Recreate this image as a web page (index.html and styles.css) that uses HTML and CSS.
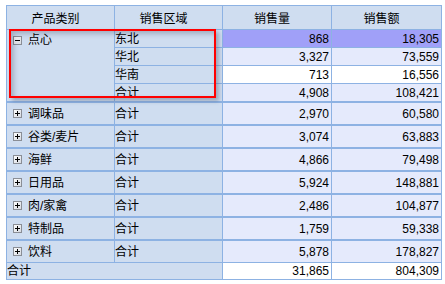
FILE: index.html
```html
<!DOCTYPE html>
<html lang="zh-CN">
<head>
<meta charset="utf-8">
<title>销售报表</title>
<link rel="stylesheet" href="styles.css">
</head>
<body>
<table class="grid">
  <thead>
    <tr class="head">
      <th class="c1">产品类别</th>
      <th class="c2">销售区域</th>
      <th class="c3">销售量</th>
      <th class="c4">销售额</th>
    </tr>
  </thead>
  <tbody>
    <tr class="sub">
      <td class="lab cat open" rowspan="4"><span class="tg"><svg class="ico" width="9" height="9" viewBox="0 0 9 9"><defs><linearGradient id="gm" x1="0" y1="0" x2="1" y2="1"><stop offset="0" stop-color="#ffffff"/><stop offset="1" stop-color="#d4d8e0"/></linearGradient></defs><rect x="0.5" y="0.5" width="8" height="8" fill="url(#gm)" stroke="#8a8e96"/><path d="M2 4.5H7" stroke="#000" stroke-width="1"/></svg>点心</span></td>
      <td class="lab reg">东北</td>
      <td class="num sel">868</td>
      <td class="num sel">18,305</td>
    </tr>
    <tr class="sub">
      <td class="lab reg">华北</td>
      <td class="num">3,327</td>
      <td class="num">73,559</td>
    </tr>
    <tr class="sub">
      <td class="lab reg">华南</td>
      <td class="num wh">713</td>
      <td class="num wh">16,556</td>
    </tr>
    <tr class="sub last">
      <td class="lab reg">合计</td>
      <td class="num">4,908</td>
      <td class="num">108,421</td>
    </tr>
    <tr class="grp">
      <td class="lab cat"><span class="tg"><svg class="ico" width="9" height="9" viewBox="0 0 9 9"><rect x="0.5" y="0.5" width="8" height="8" fill="url(#gm)" stroke="#8a8e96"/><path d="M2 4.5H7M4.5 2V7" stroke="#000" stroke-width="1"/></svg>调味品</span></td>
      <td class="lab reg">合计</td>
      <td class="num">2,970</td>
      <td class="num">60,580</td>
    </tr>
    <tr class="grp">
      <td class="lab cat"><span class="tg"><svg class="ico" width="9" height="9" viewBox="0 0 9 9"><rect x="0.5" y="0.5" width="8" height="8" fill="url(#gm)" stroke="#8a8e96"/><path d="M2 4.5H7M4.5 2V7" stroke="#000" stroke-width="1"/></svg>谷类/麦片</span></td>
      <td class="lab reg">合计</td>
      <td class="num">3,074</td>
      <td class="num">63,883</td>
    </tr>
    <tr class="grp">
      <td class="lab cat"><span class="tg"><svg class="ico" width="9" height="9" viewBox="0 0 9 9"><rect x="0.5" y="0.5" width="8" height="8" fill="url(#gm)" stroke="#8a8e96"/><path d="M2 4.5H7M4.5 2V7" stroke="#000" stroke-width="1"/></svg>海鲜</span></td>
      <td class="lab reg">合计</td>
      <td class="num">4,866</td>
      <td class="num">79,498</td>
    </tr>
    <tr class="grp">
      <td class="lab cat"><span class="tg"><svg class="ico" width="9" height="9" viewBox="0 0 9 9"><rect x="0.5" y="0.5" width="8" height="8" fill="url(#gm)" stroke="#8a8e96"/><path d="M2 4.5H7M4.5 2V7" stroke="#000" stroke-width="1"/></svg>日用品</span></td>
      <td class="lab reg">合计</td>
      <td class="num">5,924</td>
      <td class="num">148,881</td>
    </tr>
    <tr class="grp">
      <td class="lab cat"><span class="tg"><svg class="ico" width="9" height="9" viewBox="0 0 9 9"><rect x="0.5" y="0.5" width="8" height="8" fill="url(#gm)" stroke="#8a8e96"/><path d="M2 4.5H7M4.5 2V7" stroke="#000" stroke-width="1"/></svg>肉/家禽</span></td>
      <td class="lab reg">合计</td>
      <td class="num">2,486</td>
      <td class="num">104,877</td>
    </tr>
    <tr class="grp">
      <td class="lab cat"><span class="tg"><svg class="ico" width="9" height="9" viewBox="0 0 9 9"><rect x="0.5" y="0.5" width="8" height="8" fill="url(#gm)" stroke="#8a8e96"/><path d="M2 4.5H7M4.5 2V7" stroke="#000" stroke-width="1"/></svg>特制品</span></td>
      <td class="lab reg">合计</td>
      <td class="num">1,759</td>
      <td class="num">59,338</td>
    </tr>
    <tr class="grp end">
      <td class="lab cat"><span class="tg"><svg class="ico" width="9" height="9" viewBox="0 0 9 9"><rect x="0.5" y="0.5" width="8" height="8" fill="url(#gm)" stroke="#8a8e96"/><path d="M2 4.5H7M4.5 2V7" stroke="#000" stroke-width="1"/></svg>饮料</span></td>
      <td class="lab reg">合计</td>
      <td class="num">5,878</td>
      <td class="num">178,827</td>
    </tr>
    <tr class="total">
      <td class="lab reg" colspan="2">合计</td>
      <td class="num wh">31,865</td>
      <td class="num wh">804,309</td>
    </tr>
  </tbody>
</table>
<div class="mark"></div>
</body>
</html>
```

FILE: styles.css
```css
html, body {
  margin: 0;
  padding: 0;
  background: #ffffff;
}

body {
  position: relative;
  width: 445px;
  height: 284px;
  overflow: hidden;
  font-family: "Liberation Sans", "Noto Sans CJK SC", sans-serif;
  font-size: 12px;
  color: #000000;
}

.grid {
  margin: 5px 0 0 6px;
  width: 436px;
  table-layout: fixed;
  border-collapse: separate;
  border-spacing: 0;
  border-top: 1px solid #8db2e3;
  border-left: 1px solid #8db2e3;
}

.grid th,
.grid td {
  box-sizing: border-box;
  padding: 0;
  border-right: 1px solid #8db2e3;
  border-bottom: 1px solid #8db2e3;
  line-height: 14px;
  white-space: nowrap;
  overflow: hidden;
}

.grid th {
  height: 24px;
  background: #cfddf0;
  font-weight: normal;
  text-align: center;
  vertical-align: middle;
  padding: 2px 10px 0 0;
}

.c1, .c2 { width: 108px; }
.c3 { width: 109px; }
.c4 { width: 110px; }

.sub td { height: 18px; }
.sub.last td { height: 19px; border-bottom-width: 2px; }
.grid td.cat.open { border-bottom-width: 2px; vertical-align: top; padding-top: 3px; }

.grp td { height: 23px; border-bottom-width: 2px; }
.grp.end td { height: 22px; border-bottom-width: 1px; }
.total td { height: 17px; }

.lab {
  background: #cfddf0;
  text-align: left;
  vertical-align: middle;
}

.reg { padding-left: 1px; }

.cat { padding-left: 6px; }

.tg {
  display: flex;
  align-items: center;
  padding-left: 6px;
}

.ico {
  flex: none;
  margin-right: 6px;
}

.num {
  background: #e5eafc;
  text-align: right;
  vertical-align: middle;
  padding-right: 2px;
}

.grid td.num { padding-right: 2px; }

.num.sel { background: #a0a0f8; }
.num.wh { background: #ffffff; }

.mark {
  position: absolute;
  left: 9px;
  top: 29px;
  width: 207px;
  height: 69px;
  box-sizing: border-box;
  border: 2px solid #ff0000;
  box-shadow: 3px 3px 4px rgba(60, 70, 90, 0.35), inset 3px 3px 5px rgba(60, 70, 90, 0.3);
  pointer-events: none;
}
```
